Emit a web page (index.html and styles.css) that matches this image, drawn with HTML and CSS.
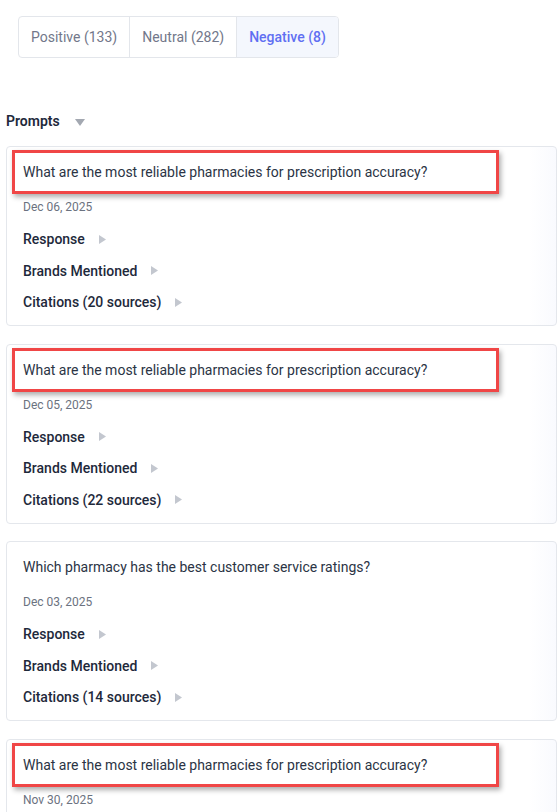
FILE: index.html
```html
<!DOCTYPE html>
<html>
<head>
<meta charset="utf-8">
<link rel="stylesheet" href="styles.css">
</head>
<body>
<div class="page">
  <div class="tabs">
    <div class="tab">Positive (133)</div>
    <div class="tab">Neutral (282)</div>
    <div class="tab active">Negative (8)</div>
  </div>

  <div class="section-head">
    <span>Prompts</span>
    <svg class="caret-down" width="10" height="7" viewBox="0 0 10 7"><path d="M0 0H10L5 7Z" fill="#a3a8b1"/></svg>
  </div>

  <div class="cards">
    <div class="card">
      <div class="question"><span class="mark"></span>What are the most reliable pharmacies for prescription accuracy?</div>
      <div class="date">Dec 06, 2025</div>
      <div class="rows">
        <div class="row">Response <svg class="caret" width="7" height="9" viewBox="0 0 7 9"><path d="M0 0L7 4.5L0 9Z"/></svg></div>
        <div class="row">Brands Mentioned <svg class="caret" width="7" height="9" viewBox="0 0 7 9"><path d="M0 0L7 4.5L0 9Z"/></svg></div>
        <div class="row">Citations (20 sources) <svg class="caret" width="7" height="9" viewBox="0 0 7 9"><path d="M0 0L7 4.5L0 9Z"/></svg></div>
      </div>
    </div>
    <div class="card">
      <div class="question"><span class="mark"></span>What are the most reliable pharmacies for prescription accuracy?</div>
      <div class="date">Dec 05, 2025</div>
      <div class="rows">
        <div class="row">Response <svg class="caret" width="7" height="9" viewBox="0 0 7 9"><path d="M0 0L7 4.5L0 9Z"/></svg></div>
        <div class="row">Brands Mentioned <svg class="caret" width="7" height="9" viewBox="0 0 7 9"><path d="M0 0L7 4.5L0 9Z"/></svg></div>
        <div class="row">Citations (22 sources) <svg class="caret" width="7" height="9" viewBox="0 0 7 9"><path d="M0 0L7 4.5L0 9Z"/></svg></div>
      </div>
    </div>
    <div class="card">
      <div class="question">Which pharmacy has the best customer service ratings?</div>
      <div class="date">Dec 03, 2025</div>
      <div class="rows">
        <div class="row">Response <svg class="caret" width="7" height="9" viewBox="0 0 7 9"><path d="M0 0L7 4.5L0 9Z"/></svg></div>
        <div class="row">Brands Mentioned <svg class="caret" width="7" height="9" viewBox="0 0 7 9"><path d="M0 0L7 4.5L0 9Z"/></svg></div>
        <div class="row">Citations (14 sources) <svg class="caret" width="7" height="9" viewBox="0 0 7 9"><path d="M0 0L7 4.5L0 9Z"/></svg></div>
      </div>
    </div>
    <div class="card">
      <div class="question"><span class="mark"></span>What are the most reliable pharmacies for prescription accuracy?</div>
      <div class="date">Nov 30, 2025</div>
      <div class="rows">
        <div class="row">Response <svg class="caret" width="7" height="9" viewBox="0 0 7 9"><path d="M0 0L7 4.5L0 9Z"/></svg></div>
        <div class="row">Brands Mentioned <svg class="caret" width="7" height="9" viewBox="0 0 7 9"><path d="M0 0L7 4.5L0 9Z"/></svg></div>
        <div class="row">Citations (18 sources) <svg class="caret" width="7" height="9" viewBox="0 0 7 9"><path d="M0 0L7 4.5L0 9Z"/></svg></div>
      </div>
    </div>
  </div>
</div>
</body>
</html>
```

FILE: styles.css
```css
* { box-sizing: border-box; }
html, body { margin: 0; padding: 0; background: #ffffff; }
body {
  font-family: Roboto, "Liberation Sans", Arial, sans-serif;
  color: #1e293b;
  overflow: hidden;
  height: 812px;
}
.page {
  padding: 16px 1px 0 6px;
}
.tabs {
  display: inline-flex;
  margin-left: 12px;
  border: 1px solid #e3e6eb;
  border-radius: 4px;
  overflow: hidden;
  height: 42px;
}
.tab {
  display: flex;
  align-items: center;
  padding: 0 12px 0 12px;
  font-size: 14px;
  color: #72778a;
  border-left: 1px solid #e3e6eb;
}
.tab:first-child { border-left: none; }
.tab.active {
  color: #5f6ff2;
  font-weight: 500;
  background: #f4f7fd;
}
.section-head {
  display: flex;
  align-items: center;
  gap: 15px;
  margin-top: 53px;
  height: 20px;
  font-size: 14px;
  font-weight: 600;
  color: #1e293b;
}
.caret-down { margin-top: 2px; }
.cards {
  display: flex;
  flex-direction: column;
  gap: 17.5px;
  margin-top: 15px;
}
.card {
  border: 1px solid #e4e7ec;
  border-radius: 4px;
  padding: 3px 16px 13px 16px;
  height: 180px;
  background: linear-gradient(to right, #ffffff 0, #ffffff 95%, #f9fafe 100%);
}
.question {
  position: relative;
  height: 44px;
  display: flex;
  align-items: center;
  font-size: 14px;
  color: #2b3445;
}
.mark {
  position: absolute;
  left: -11px;
  top: 0;
  width: 487px;
  height: 44px;
  border: 3px solid #f04646;
  box-shadow: 2px 3px 5px rgba(0, 0, 0, 0.32);
  pointer-events: none;
}
.date {
  margin-top: 5px;
  font-size: 12px;
  line-height: 16px;
  color: #6b7280;
}
.rows {
  display: flex;
  flex-direction: column;
  gap: 11.5px;
  margin-top: 14px;
}
.row {
  display: flex;
  align-items: center;
  gap: 14px;
  height: 20px;
  font-size: 14px;
  font-weight: 500;
  color: #1e293b;
}
.caret { fill: #c3c7cf; }
```
